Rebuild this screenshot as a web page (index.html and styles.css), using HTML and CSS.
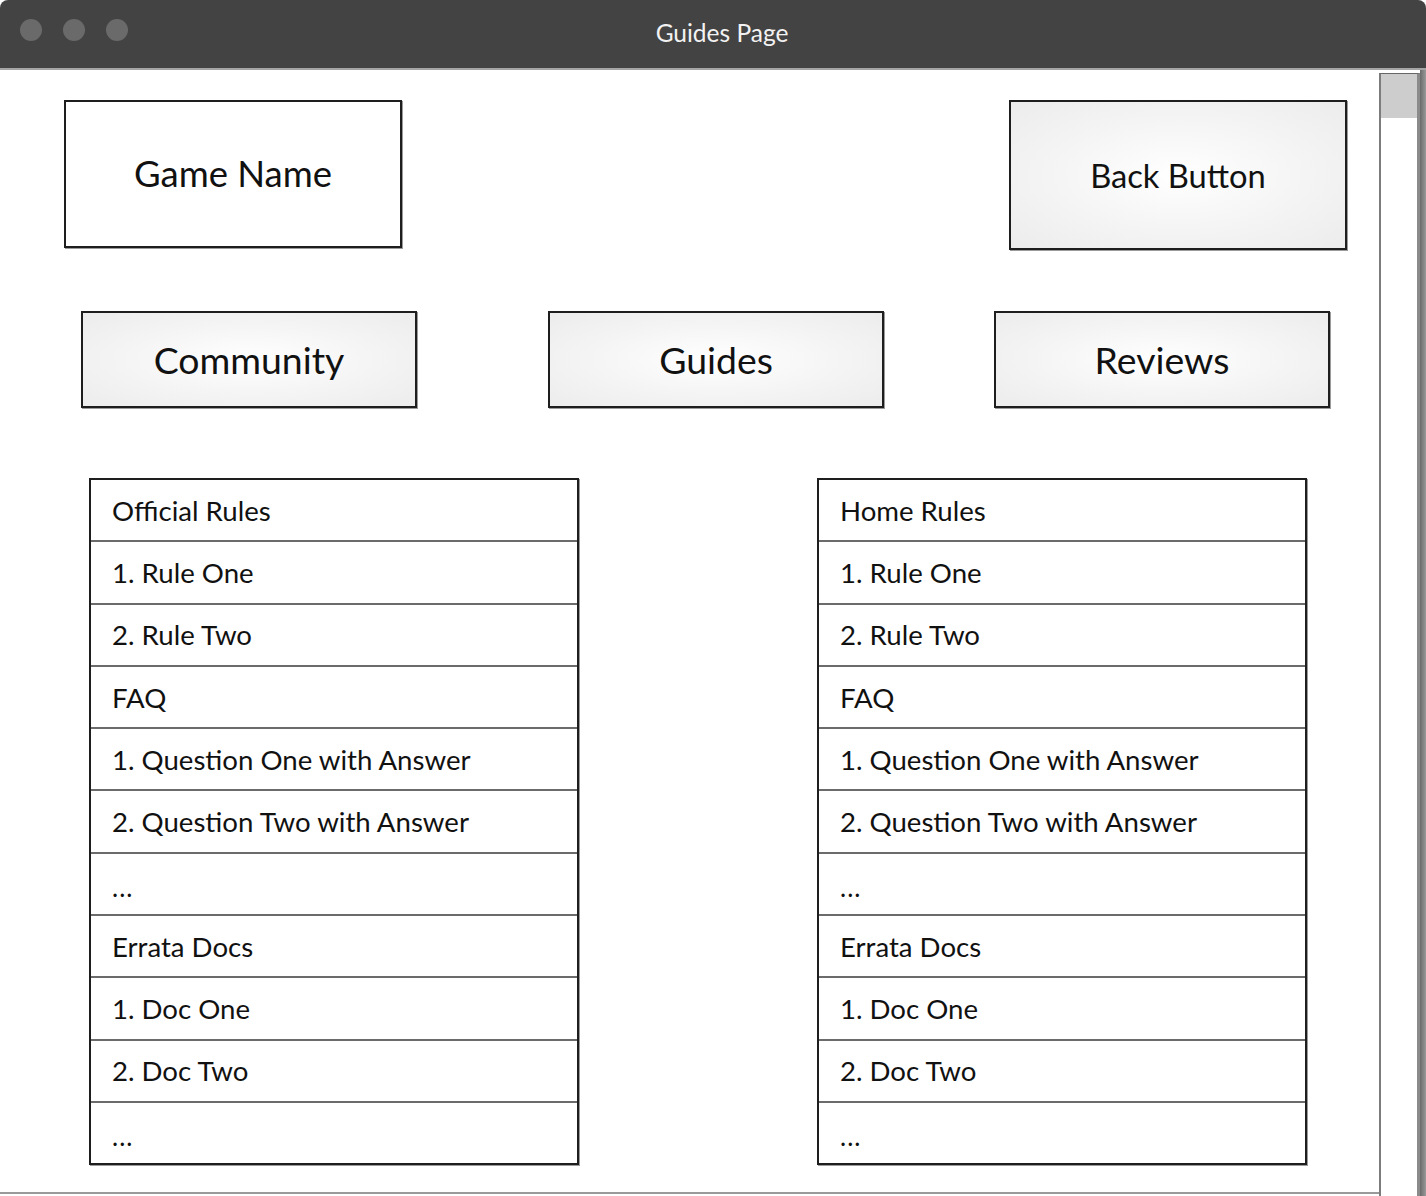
FILE: index.html
```html
<!DOCTYPE html>
<html lang="en">
<head>
<meta charset="utf-8">
<title>Guides Page</title>
<link rel="stylesheet" href="styles.css">
</head>
<body>
<div class="window">
  <div class="titlebar">
    <div class="dots">
      <span class="dot"></span><span class="dot"></span><span class="dot"></span>
    </div>
    <div class="title">Guides Page</div>
  </div>
  <div class="frame">
    <main class="content">
      <header class="header">
        <div class="box game-name">Game Name</div>
        <div class="box btn back-btn">Back Button</div>
      </header>
      <nav class="tabs">
        <div class="box btn tab">Community</div>
        <div class="box btn tab tab-mid">Guides</div>
        <div class="box btn tab tab-last">Reviews</div>
      </nav>
      <section class="lists">
        <ul class="list">
          <li>Official Rules</li>
          <li>1. Rule One</li>
          <li>2. Rule Two</li>
          <li>FAQ</li>
          <li>1. Question One with Answer</li>
          <li>2. Question Two with Answer</li>
          <li class="more">...</li>
          <li>Errata Docs</li>
          <li>1. Doc One</li>
          <li>2. Doc Two</li>
          <li class="more">...</li>
        </ul>
        <ul class="list">
          <li>Home Rules</li>
          <li>1. Rule One</li>
          <li>2. Rule Two</li>
          <li>FAQ</li>
          <li>1. Question One with Answer</li>
          <li>2. Question Two with Answer</li>
          <li class="more">...</li>
          <li>Errata Docs</li>
          <li>1. Doc One</li>
          <li>2. Doc Two</li>
          <li class="more">...</li>
        </ul>
      </section>
    </main>
    <div class="scrollbar"><div class="thumb"></div></div>
  </div>
</div>
</body>
</html>
```
FILE: styles.css
```css
* { box-sizing: border-box; }
html, body { margin: 0; padding: 0; background: #ffffff; }
body {
  font-family: "Source Sans Pro", Lato, "Noto Sans", sans-serif;
  color: #111;
  width: 1426px;
  height: 1196px;
  overflow: hidden;
}
.window {
  width: 1426px;
  height: 1196px;
  display: flex;
  flex-direction: column;
}
.titlebar {
  height: 70px;
  background: #434343;
  border-bottom: 2px solid #a5a5a5;
  border-radius: 8px 8px 0 0;
  position: relative;
  display: flex;
  align-items: center;
  justify-content: center;
}
.dots {
  position: absolute;
  left: 20px;
  top: 19px;
  display: flex;
  gap: 21px;
}
.dot {
  width: 22px;
  height: 22px;
  border-radius: 50%;
  background: #6a6a6a;
}
.title {
  color: #f2f2f2;
  font-size: 24.5px;
  margin-top: -4px;
  margin-left: 18px;
}
.frame {
  flex: 1;
  display: flex;
  min-height: 0;
}
.content {
  width: 1379px;
  height: 1124px;
  border-bottom: 2px solid #9a9a9a;
}
.scrollbar {
  margin-top: 3px;
  width: 41px;
  border-left: 2px solid #7c7c7c;
  border-top: 1px solid #666;
  border-right: 3px solid #8a8a8a;
  background: #fff;
}
.thumb {
  height: 44px;
  background: #cdcdcd;
}
.frame::after {
  content: "";
  width: 6px;
  background: linear-gradient(to right, #6a6a6a, #9a9a9a);
}

.box {
  border: 2px solid #1e1e1e;
  background: #fff;
  display: flex;
  align-items: center;
  justify-content: center;
  box-shadow: 1px 1px 0 #9a9a9a;
}
.btn {
  background: radial-gradient(ellipse at center, #ffffff 0%, #f4f4f4 55%, #ececec 100%);
}

.header {
  display: flex;
  justify-content: space-between;
  padding: 30px 32px 0 64px;
}
.game-name {
  width: 338px;
  height: 148px;
  font-size: 36.5px;
  padding-bottom: 2px;
}
.back-btn {
  width: 338px;
  height: 150px;
  font-size: 32.7px;
}

.tabs {
  display: flex;
  padding-left: 81px;
  margin-top: 61px;
}
.tab {
  width: 336px;
  height: 97px;
  font-size: 37.4px;
}
.tab-mid { margin-left: 131px; }
.tab-last { margin-left: 110px; }

.lists {
  display: flex;
  gap: 238px;
  padding-left: 89px;
  margin-top: 70px;
}
.list {
  list-style: none;
  margin: 0;
  padding: 0;
  width: 490px;
  border: 2px solid #1e1e1e;
  box-shadow: 1px 1px 0 #9a9a9a;
}
.list li {
  height: 62.3px;
  border-bottom: 2px solid #6b6b6b;
  display: flex;
  align-items: center;
  padding-left: 21px;
  font-size: 27.6px;
}
.list li:last-child {
  border-bottom: none;
  height: 60.3px;
}
.list li.more {
  align-items: flex-end;
  padding-bottom: 11px;
  font-size: 26px;
  letter-spacing: 1px;
}
```
